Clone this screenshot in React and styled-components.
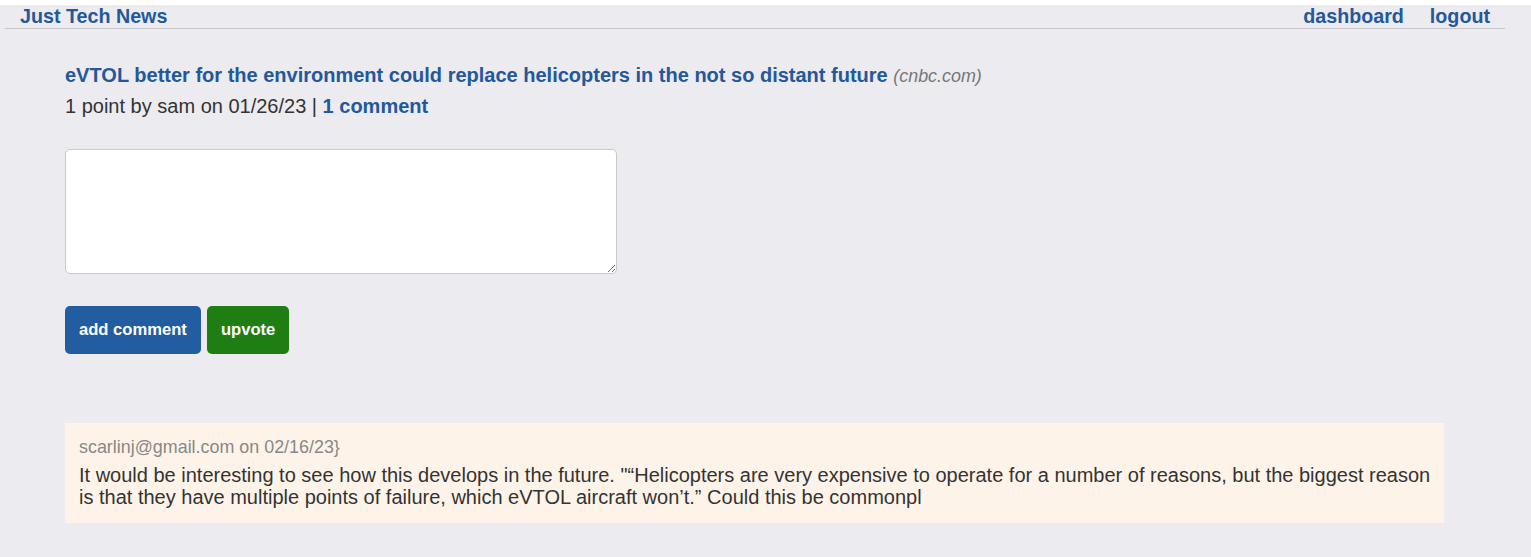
import styled, { createGlobalStyle } from "styled-components";

const GlobalStyle = createGlobalStyle`
  html, body {
    margin: 0;
    padding: 0;
    background: #ebebf0;
  }
  body {
    font-family: "Liberation Sans", Arial, sans-serif;
    color: #333;
  }
  * {
    box-sizing: border-box;
  }
`;

const Page = styled.div`
  min-height: 557px;
  border-top: 5px solid #fff;
  padding: 0 26px 0 5px;
`;

const Header = styled.header`
  display: flex;
  justify-content: space-between;
  align-items: center;
  height: 24px;
  padding: 0 15px;
  border-bottom: 1px solid #c8c8cc;
`;

const Brand = styled.a`
  font-size: 19.7px;
  font-weight: 700;
  color: #24589a;
  text-decoration: none;
`;

const Nav = styled.nav`
  display: flex;
  gap: 26px;
`;

const NavLink = styled.a`
  font-size: 19.7px;
  font-weight: 700;
  color: #24589a;
  text-decoration: none;
`;

const Main = styled.main`
  padding: 33px 61px 0 60px;
`;

const PostTitle = styled.div`
  font-size: 20px;
  line-height: 26px;
`;

const TitleLink = styled.a`
  font-weight: 700;
  color: #24589a;
  text-decoration: none;
`;

const Source = styled.span`
  font-style: italic;
  color: #777;
  font-size: 17.9px;
`;

const Meta = styled.div`
  font-size: 20px;
  line-height: 26px;
  margin-top: 4px;
  color: #333;

  a {
    font-weight: 700;
    color: #24589a;
    text-decoration: none;
  }
`;

const CommentForm = styled.form`
  margin-top: 30px;
  display: flex;
  flex-direction: column;
  align-items: flex-start;
`;

const TextArea = styled.textarea`
  width: 552px;
  height: 125px;
  border: 1px solid #c9c9cc;
  border-radius: 5px;
  background: #fff;
  font-family: inherit;
`;

const Actions = styled.div`
  display: flex;
  gap: 6px;
  margin-top: 32px;
`;

const Button = styled.button`
  height: 48px;
  padding: 0 14px;
  border: none;
  border-radius: 5px;
  background: ${(p) => p.bg};
  color: #fff;
  font-family: inherit;
  font-size: 16.6px;
  font-weight: 700;
`;

const CommentBox = styled.section`
  margin-top: 69px;
  background: #fef3e9;
  padding: 13px 8px 15px 14px;
`;

const CommentMeta = styled.div`
  font-size: 17.9px;
  line-height: 22px;
  color: #888;
`;

const CommentText = styled.p`
  margin: 6px 0 0;
  font-size: 20px;
  line-height: 22px;
  color: #333;
`;

export default function App() {
  return (
    <>
      <GlobalStyle />
      <Page>
        <Header>
          <Brand href="#">Just Tech News</Brand>
          <Nav>
            <NavLink href="#">dashboard</NavLink>
            <NavLink href="#">logout</NavLink>
          </Nav>
        </Header>
        <Main>
          <PostTitle>
            <TitleLink href="#">
              eVTOL better for the environment could replace helicopters in the
              not so distant future
            </TitleLink>{" "}
            <Source>(cnbc.com)</Source>
          </PostTitle>
          <Meta>
            1 point by sam on 01/26/23 | <a href="#">1 comment</a>
          </Meta>
          <CommentForm onSubmit={(e) => e.preventDefault()}>
            <TextArea />
            <Actions>
              <Button bg="#225ca1">add comment</Button>
              <Button bg="#1e7e14">upvote</Button>
            </Actions>
          </CommentForm>
          <CommentBox>
            <CommentMeta>scarlinj@gmail.com on 02/16/23&#125;</CommentMeta>
            <CommentText>
              It would be interesting to see how this develops in the future.
              "“Helicopters are very expensive to operate for a number of
              reasons, but the biggest reason is that they have multiple points
              of failure, which eVTOL aircraft won’t.” Could this be commonpl
            </CommentText>
          </CommentBox>
        </Main>
      </Page>
    </>
  );
}
